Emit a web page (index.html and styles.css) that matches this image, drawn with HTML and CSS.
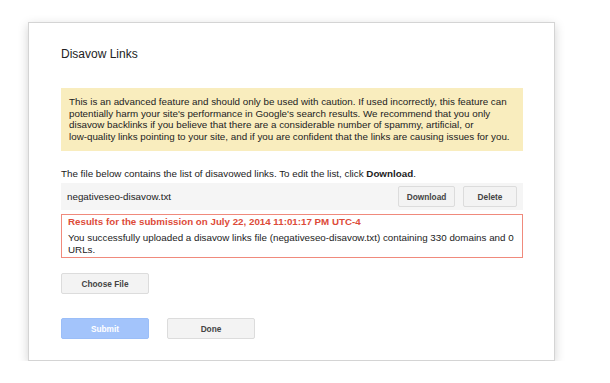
FILE: index.html
```html
<!DOCTYPE html>
<html>
<head>
<meta charset="utf-8">
<link rel="stylesheet" href="styles.css">
</head>
<body>
<div class="card">
  <h1 class="title">Disavow Links</h1>
  <div class="warning">This is an advanced feature and should only be used with caution. If used incorrectly, this feature can potentially harm your site's performance in Google's search results. We recommend that you only disavow backlinks if you believe that there are a considerable number of spammy, artificial, or <span class="nowrap">low-quality</span> links pointing to your site, and if you are confident that the links are causing issues for you.</div>
  <p class="intro">The file below contains the list of disavowed links. To edit the list, click <b>Download</b>.</p>
  <div class="filerow">
    <span class="filename">negativeseo-disavow.txt</span>
    <div class="filebtns">
      <button class="btn btn-download">Download</button>
      <button class="btn btn-delete">Delete</button>
    </div>
  </div>
  <div class="result">
    <div class="result-title">Results for the submission on July 22, 2014 11:01:17 PM UTC-4</div>
    <div class="result-body">You successfully uploaded a disavow links file (negativeseo-disavow.txt) containing 330 domains and 0 URLs.</div>
  </div>
  <button class="btn btn-wide btn-choose">Choose File</button>
  <div class="actions">
    <button class="btn btn-wide btn-submit">Submit</button>
    <button class="btn btn-wide">Done</button>
  </div>
</div>
</body>
</html>
```
FILE: styles.css
```css
html, body {
  margin: 0;
  padding: 0;
  background: #ffffff;
}
body {
  font-family: "Liberation Sans", Arial, sans-serif;
  color: #222222;
  padding: 22px 0 0 28px;
}
.card {
  box-sizing: border-box;
  width: 527px;
  height: 339px;
  border: 1px solid #d4d4d4;
  background: #fff;
  box-shadow: 0 3px 10px rgba(0,0,0,0.18);
  padding: 24px 31px 0 32px;
}
.title {
  margin: 0;
  font-size: 12px;
  line-height: 14px;
  font-weight: normal;
  color: #222;
}
.warning {
  margin-top: 27px;
  background: #f9edbe;
  padding: 8px 8px 9px 8px;
  font-size: 9.8px;
  line-height: 11.5px;
  color: #222;
}
.nowrap {
  white-space: nowrap;
}
.intro {
  margin: 17px 0 0 0;
  font-size: 9.8px;
  line-height: 12px;
}
.filerow {
  margin-top: 3px;
  background: #f5f5f5;
  height: 27px;
  box-sizing: border-box;
  padding: 3px 6px 3px 6px;
  display: flex;
  align-items: center;
  justify-content: space-between;
}
.filename {
  font-size: 9.8px;
}
.filebtns {
  display: flex;
  gap: 8px;
}
.btn {
  font-family: "Liberation Sans", Arial, sans-serif;
  font-size: 8.3px;
  font-weight: bold;
  color: #444;
  background: #f3f3f3;
  border: 1px solid #dcdcdc;
  border-radius: 2px;
  height: 21px;
  padding: 0;
  box-sizing: border-box;
}
.btn-download { width: 57px; }
.btn-delete { width: 54px; }
.result {
  margin-top: 4px;
  border: 1px solid #f08a7c;
  padding: 1px 6px 1px 6px;
  font-size: 9.8px;
}
.result-title {
  color: #dd4b39;
  font-weight: bold;
  font-size: 9.75px;
  line-height: 12px;
}
.result-body {
  margin-top: 4px;
  line-height: 12px;
  color: #222;
}
.btn-wide {
  width: 88px;
  display: block;
}
.btn-choose {
  margin-top: 15px;
}
.actions {
  margin-top: 24px;
  display: flex;
  gap: 18px;
}
.btn-submit {
  background: #a3c4fb;
  border-color: #9bbef8;
  color: #ffffff;
}
```
